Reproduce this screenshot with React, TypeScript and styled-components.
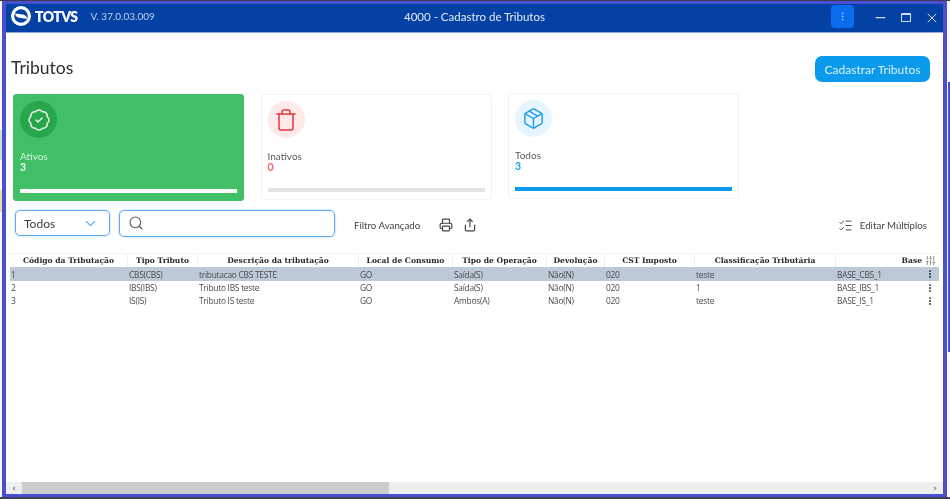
import React from "react";
import styled, { createGlobalStyle } from "styled-components";
import { BadgeCheck, Trash, Package, Search, ChevronDown, Printer, Share, ListChecks, EllipsisVertical, Minus, X, SlidersVertical } from "lucide-react";

const Global = createGlobalStyle`
  html, body { margin: 0; padding: 0; background: #f8f8f6; }
  * { box-sizing: border-box; }
`;

const Screen = styled.div`
  width: 950px;
  height: 499px;
  overflow: hidden;
  padding: 1px 3px 2px 2px;
  font-family: Lato, "Open Sans", sans-serif;
  background:
    linear-gradient(#4a4fd2, #4a4fd2) right 82px / 2px 270px no-repeat,
    linear-gradient(#3d4456, #3d4456) left bottom / 100% 2px no-repeat,
    linear-gradient(#3a3a50, #3a3a50) left top / 100% 1px no-repeat,
    linear-gradient(#e5e2a0, #e5e2a0) left 190px / 2px 22px no-repeat,
    linear-gradient(#cfe3c0, #cfe3c0) left 130px / 2px 30px no-repeat,
    #f8f8f6;
`;

const AppWindow = styled.div`
  height: 100%;
  display: flex;
  flex-direction: column;
  border: 3px solid #4a4fd2;
  border-left-width: 4px;
  border-right-width: 4px;
  background: #fff;
  filter: blur(0.5px);
`;

const TitleBar = styled.header`
  height: 29px;
  flex: none;
  display: grid;
  grid-template-columns: 1fr auto 1fr;
  align-items: center;
  padding-bottom: 4px;
  background: #0341a4;
  color: #dfe8f6;
  border-bottom: 1px solid #8fb0e0;
`;

const Brand = styled.div`
  display: flex;
  align-items: center;
  padding-left: 4px;
`;

const BrandName = styled.span`
  margin-left: 3px;
  font: 800 14px Lato, sans-serif;
  color: #fff;
  letter-spacing: -0.6px;
`;

const Version = styled.span`
  margin-left: 13px;
  font-size: 10px;
  color: #c3d2ea;
`;

const WindowTitle = styled.div`
  font-size: 11.5px;
  color: #e4ebf7;
`;

const WindowActions = styled.div`
  display: flex;
  align-items: center;
  justify-content: flex-end;
  color: #cfdcf1;
  gap: 4px;
`;

const ActionSlot = styled.span`
  width: 22px;
  height: 17px;
  margin-top: 3px;
  display: flex;
  align-items: center;
  justify-content: center;
`;

const MenuButton = styled.button`
  width: 23px;
  height: 23px;
  margin-right: 11px;
  padding: 0;
  border: 0;
  border-radius: 4px;
  background: #0a6ded;
  color: #a9c8f5;
  display: flex;
  align-items: center;
  justify-content: center;
`;

const MaximizeGlyph = styled.span`
  width: 10px;
  height: 9px;
  border: 1.2px solid #cfdcf1;
  border-top-width: 2.5px;
  border-radius: 1px;
`;

const Content = styled.main`
  flex: 1;
  min-height: 0;
  display: flex;
  flex-direction: column;
`;

const PageHead = styled.div`
  height: 61px;
  flex: none;
  display: flex;
  align-items: flex-start;
  justify-content: space-between;
  padding: 23px 13px 0 5px;
`;

const PageTitle = styled.h1`
  margin: 1px 0 0;
  font: 400 17.5px/22px Lato, sans-serif;
  color: #2f3033;
`;

const PrimaryButton = styled.button`
  width: 115px;
  height: 26px;
  padding: 0;
  border: 0;
  border-radius: 7px;
  background: #0c9bec;
  color: #d9f0fd;
  font: 400 12px Lato, sans-serif;
`;

const Cards = styled.section`
  display: flex;
  gap: 16.5px;
  padding-left: 7px;
  height: 108px;
  flex: none;
`;

const Card = styled.article<{ $active?: boolean; $raised?: boolean }>`
  width: 231px;
  height: ${(p) => (p.$active ? 107 : 106)}px;
  margin-top: ${(p) => (p.$raised ? -1 : 0)}px;
  border-radius: 3px;
  padding: 6px;
  display: flex;
  flex-direction: column;
  background: ${(p) => (p.$active ? "#41bf66" : "#fff")};
  border: 1px solid ${(p) => (p.$active ? "#41bf66" : "#f3f3f3")};
`;

const IconCircle = styled.div<{ $bg: string; $fg: string }>`
  width: 37px;
  height: 37px;
  border-radius: 50%;
  flex: none;
  display: flex;
  align-items: center;
  justify-content: center;
  background: ${(p) => p.$bg};
  color: ${(p) => p.$fg};
`;

const CardLabel = styled.div<{ $light?: boolean }>`
  margin-top: 13px;
  font-size: 10px;
  line-height: 11px;
  color: ${(p) => (p.$light ? "#d6f2de" : "#5a5a5a")};
`;

const CardValue = styled.div<{ $color: string }>`
  font-size: 10.5px;
  font-weight: 700;
  line-height: 11px;
  color: ${(p) => p.$color};
`;

const Bar = styled.div<{ $color: string }>`
  margin-top: auto;
  margin-bottom: 1px;
  height: 4px;
  background: ${(p) => p.$color};
`;

const FilterRow = styled.div`
  height: 30px;
  flex: none;
  margin-top: 6px;
  display: flex;
  align-items: center;
  padding: 0 16px 0 9px;
`;

const SelectBox = styled.div`
  width: 95px;
  height: 26px;
  border: 1px solid #5dabf2;
  border-radius: 5px;
  display: flex;
  align-items: center;
  justify-content: space-between;
  padding: 0 10px 0 8px;
  font-size: 12px;
  color: #3d3d3d;
  box-shadow: 0 0 2px #8fc8f6;
  svg { color: #4ca6ee; }
`;

const SearchBox = styled.div`
  width: 216px;
  height: 27px;
  margin-left: 9px;
  border: 1px solid #5dabf2;
  border-radius: 5px;
  display: flex;
  align-items: center;
  padding-left: 8px;
  color: #555;
  box-shadow: 0 0 2px #8fc8f6;
`;

const FilterLink = styled.span`
  margin: 3px 0 0 19px;
  font-size: 9.7px;
  color: #444;
`;

const ToolIcons = styled.div`
  margin: 3px 0 0 19px;
  display: flex;
  gap: 10px;
  color: #444;
`;

const EditMany = styled.div`
  margin: 4px 0 0 auto;
  display: flex;
  align-items: center;
  gap: 7px;
  font-size: 9.7px;
  color: #444;
`;

const TableArea = styled.div`
  margin-top: 15px;
  margin-left: 4px;
  width: 929px;
  flex: 1;
  min-height: 0;
  display: flex;
  flex-direction: column;
`;

const COLUMNS = "118px 70px 161px 94px 94px 58px 90px 141px 103px";

const HeadRow = styled.div`
  display: grid;
  grid-template-columns: ${COLUMNS};
  height: 14px;
  flex: none;
  border-top: 1px solid #f0f0f0;
`;

const HeadCell = styled.div<{ $right?: boolean }>`
  display: flex;
  align-items: center;
  justify-content: ${(p) => (p.$right ? "flex-end" : "center")};
  gap: 3px;
  padding-right: ${(p) => (p.$right ? "3px" : "0")};
  font: 700 7.6px "DejaVu Serif", serif;
  color: #2a2a2a;
  border-right: 1px solid #f0f0f0;
  white-space: nowrap;
  svg { color: #888; }
  &:last-child { border-right: 0; }
`;

const BodyRows = styled.div`
  flex: 1;
`;

const BodyRow = styled.div<{ $selected?: boolean }>`
  display: grid;
  grid-template-columns: ${COLUMNS};
  align-items: center;
  height: ${(p) => (p.$selected ? 14 : 13)}px;
  background: ${(p) => (p.$selected ? "#bccad8" : "transparent")};
`;

const BodyCell = styled.div`
  font: 400 8.4px "Open Sans", sans-serif;
  letter-spacing: -0.25px;
  color: #4a4a4a;
  padding: 0 4px 0 1px;
  white-space: nowrap;
  display: flex;
  justify-content: space-between;
  align-items: center;
  svg { color: #222; }
`;

const ScrollBar = styled.div`
  height: 12px;
  flex: none;
  display: flex;
  background: #eeeeee;
`;

const ScrollArrow = styled.div`
  width: 16px;
  flex: none;
  display: flex;
  align-items: center;
  justify-content: center;
  font: 700 9px "DejaVu Sans", sans-serif;
  color: #777;
`;

const ScrollThumb = styled.div`
  width: 367px;
  background: #cdcdcd;
`;

const ScrollTrack = styled.div`
  flex: 1;
`;

const Logo = () => (
  <svg width="22" height="22" viewBox="0 0 22 22" aria-hidden="true">
    <circle cx="11" cy="11" r="8.4" fill="none" stroke="#fff" strokeWidth="3.2" />
    <path d="M5 8.5 L13 9.5 C16 10 17 12 17 14 L9 12.8 C7 12.4 5.5 11 5 8.5Z" fill="#fff" />
  </svg>
);

const rows = [
  ["1", "CBS(CBS)", "tributacao CBS TESTE", "GO", "Saída(S)", "Não(N)", "020", "teste", "BASE_CBS_1"],
  ["2", "IBS(IBS)", "Tributo IBS teste", "GO", "Saída(S)", "Não(N)", "020", "1", "BASE_IBS_1"],
  ["3", "IS(IS)", "Tributo IS teste", "GO", "Ambos(A)", "Não(N)", "020", "teste", "BASE_IS_1"],
];

const heads = ["Código da Tributação", "Tipo Tributo", "Descrição da tributação", "Local de Consumo", "Tipo de Operação", "Devolução", "CST Imposto", "Classificação Tributária"];

export default function App() {
  return (
    <>
      <Global />
      <Screen>
        <AppWindow>
          <TitleBar>
            <Brand>
              <Logo />
              <BrandName>TOTVS</BrandName>
              <Version>V. 37.0.03.009</Version>
            </Brand>
            <WindowTitle>4000 - Cadastro de Tributos</WindowTitle>
            <WindowActions>
              <MenuButton><EllipsisVertical size={11} /></MenuButton>
              <ActionSlot><Minus size={15} /></ActionSlot>
              <ActionSlot><MaximizeGlyph /></ActionSlot>
              <ActionSlot><X size={16} strokeWidth={1.5} /></ActionSlot>
            </WindowActions>
          </TitleBar>
          <Content>
            <PageHead>
              <PageTitle>Tributos</PageTitle>
              <PrimaryButton>Cadastrar Tributos</PrimaryButton>
            </PageHead>
            <Cards>
              <Card $active>
                <IconCircle $bg="#27a64c" $fg="#e4f6ea"><BadgeCheck size={24} strokeWidth={1.5} /></IconCircle>
                <CardLabel $light>Ativos</CardLabel>
                <CardValue $color="#eefaf2">3</CardValue>
                <Bar $color="#fff" />
              </Card>
              <Card>
                <IconCircle $bg="#ffe9e9" $fg="#e8343e"><Trash size={24} strokeWidth={1.5} /></IconCircle>
                <CardLabel>Inativos</CardLabel>
                <CardValue $color="#ff5f6b">0</CardValue>
                <Bar $color="#e3e3e3" />
              </Card>
              <Card $raised>
                <IconCircle $bg="#e6f5ff" $fg="#1d9cf0"><Package size={23} strokeWidth={1.5} /></IconCircle>
                <CardLabel>Todos</CardLabel>
                <CardValue $color="#1d9cf0">3</CardValue>
                <Bar $color="#0d9aea" />
              </Card>
            </Cards>
            <FilterRow>
              <SelectBox>Todos<ChevronDown size={17} strokeWidth={1.5} /></SelectBox>
              <SearchBox><Search size={16} strokeWidth={1.6} /></SearchBox>
              <FilterLink>Filtro Avançado</FilterLink>
              <ToolIcons><Printer size={14} /><Share size={14} /></ToolIcons>
              <EditMany><ListChecks size={15} strokeWidth={1.5} />Editar Múltiplos</EditMany>
            </FilterRow>
            <TableArea>
              <HeadRow>
                {heads.map((h) => <HeadCell key={h}>{h}</HeadCell>)}
                <HeadCell $right>Base<SlidersVertical size={11} /></HeadCell>
              </HeadRow>
              <BodyRows>
                {rows.map((r, i) => (
                  <BodyRow key={r[0]} $selected={i === 0}>
                    {r.map((c, j) => (
                      <BodyCell key={j}>
                        {c}
                        {j === 8 && <EllipsisVertical size={10} strokeWidth={2.5} />}
                      </BodyCell>
                    ))}
                  </BodyRow>
                ))}
              </BodyRows>
            </TableArea>
            <ScrollBar>
              <ScrollArrow>‹</ScrollArrow>
              <ScrollThumb />
              <ScrollTrack />
              <ScrollArrow>›</ScrollArrow>
            </ScrollBar>
          </Content>
        </AppWindow>
      </Screen>
    </>
  );
}
